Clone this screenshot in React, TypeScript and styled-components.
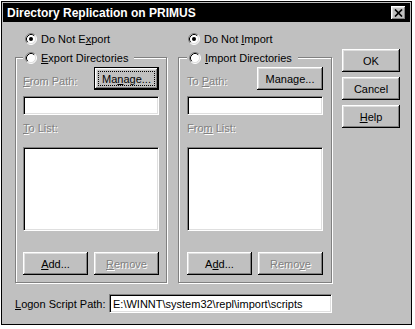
import React from 'react';
import styled, { createGlobalStyle } from 'styled-components';

const GlobalStyle = createGlobalStyle`
  html, body { margin: 0; padding: 0; background: #fff; }
  body { font-family: "Liberation Sans", Arial, sans-serif; font-size: 11px; color: #000; }
  * { box-sizing: border-box; }
`;

const Window = styled.div`
  width: 411px;
  height: 324px;
  margin: 1px 0 0 1px;
  border: 1px solid #000;
  padding: 1px;
  background: #c0c0c0;
  display: flex;
  flex-direction: column;
`;

const TitleBar = styled.div`
  height: 19px;
  flex: none;
  background: #000;
  color: #fff;
  display: flex;
  align-items: center;
  justify-content: space-between;
  padding: 0 4px;
  font-weight: bold;
  font-size: 12px;
  white-space: nowrap;
`;

const CloseButton = styled.div`
  width: 15px;
  height: 14px;
  background: #c0c0c0;
  box-shadow: inset -1px -1px #000, inset 1px 1px #fff, inset -2px -2px #808080, inset 2px 2px #dfdfdf;
  display: flex;
  align-items: center;
  justify-content: center;
`;

const Client = styled.div`
  flex: 1;
  display: flex;
  flex-direction: column;
  padding: 9px 0 0 12px;
`;

const Main = styled.div`
  display: flex;
  align-items: flex-start;
`;

const Column = styled.div<{ $ml?: number }>`
  display: flex;
  flex-direction: column;
  margin-left: ${p => p.$ml ?? 0}px;
`;

const RadioOption = styled.label<{ $ml?: number }>`
  display: inline-flex;
  align-items: center;
  gap: 4px;
  height: 15px;
  white-space: nowrap;
  margin-left: ${p => p.$ml ?? 0}px;
  align-self: flex-start;
`;

const Group = styled.div<{ $w: number; $pl: number; $pr: number }>`
  width: ${p => p.$w}px;
  height: 226px;
  margin-top: 11px;
  border: 1px solid #808080;
  box-shadow: inset 1px 1px 0 #fff, 1px 1px 0 #fff;
  padding: 0 ${p => p.$pr}px 0 ${p => p.$pl}px;
  display: flex;
  flex-direction: column;
`;

const Legend = styled.div`
  margin-top: -8px;
  align-self: flex-start;
  background: #c0c0c0;
  padding: 0 6px 0 2px;
  display: flex;
`;

const PathRow = styled.div`
  margin-top: 2px;
  display: flex;
  justify-content: space-between;
  align-items: flex-start;
`;

const DisabledLabel = styled.div<{ $mt?: number }>`
  color: #808080;
  text-shadow: 1px 1px 0 #fff;
  line-height: 13px;
  height: 13px;
  margin-top: ${p => p.$mt ?? 0}px;
  white-space: nowrap;
`;

const Field = styled.div<{ $w?: number; $mt?: number }>`
  width: ${p => (p.$w ? `${p.$w}px` : '100%')};
  height: 19px;
  margin-top: ${p => p.$mt ?? 0}px;
  background: #fff;
  border: 1px solid;
  border-color: #808080 #fff #fff #808080;
  box-shadow: inset 1px 1px #000, inset -1px -1px #dfdfdf;
  padding: 0 3px;
  display: flex;
  align-items: center;
  white-space: nowrap;
  overflow: hidden;
`;

const ListBox = styled.div`
  width: 100%;
  height: 84px;
  margin-top: 12px;
  background: #fff;
  border: 1px solid;
  border-color: #808080 #fff #fff #808080;
  box-shadow: inset 1px 1px #000, inset -1px -1px #dfdfdf;
`;

const ButtonRow = styled.div`
  margin-top: 21px;
  display: flex;
  gap: 6px;
`;

const Button = styled.div<{ $w: number; $default?: boolean; $off?: boolean }>`
  width: ${p => p.$w}px;
  height: 23px;
  flex: none;
  background: #c0c0c0;
  border: ${p => (p.$default ? '1px solid #000' : 'none')};
  box-shadow: inset -1px -1px #000, inset 1px 1px #fff, inset -2px -2px #808080, inset 2px 2px #dfdfdf;
  color: ${p => (p.$off ? '#808080' : '#000')};
  text-shadow: ${p => (p.$off ? '1px 1px 0 #fff' : 'none')};
  display: flex;
  align-items: center;
  justify-content: center;
  white-space: nowrap;
`;

const FocusRing = styled.span`
  flex: 1;
  align-self: stretch;
  margin: 3px;
  border: 1px dotted #000;
  display: flex;
  align-items: center;
  justify-content: center;
`;

const SideButtons = styled.div`
  margin: 18px 0 0 10px;
  display: flex;
  flex-direction: column;
  gap: 5px;
`;

const LogonRow = styled.div`
  margin-top: 11px;
  display: flex;
  align-items: center;
`;

const LogonLabel = styled.div`
  width: 94px;
  white-space: nowrap;
`;

const RadioIcon: React.FC<{ checked?: boolean }> = ({ checked }) => (
  <svg width="12" height="12" viewBox="0 0 12 12" style={{ flex: 'none' }}>
    <circle cx="6" cy="6" r="5" fill="#fff" />
    <path d="M9.89 2.11 A5.5 5.5 0 0 0 2.11 9.89" fill="none" stroke="#808080" strokeWidth="1" />
    <path d="M2.11 9.89 A5.5 5.5 0 0 0 9.89 2.11" fill="none" stroke="#fff" strokeWidth="1" />
    <path d="M9.18 2.82 A4.5 4.5 0 0 0 2.82 9.18" fill="none" stroke="#000" strokeWidth="1" />
    <path d="M2.82 9.18 A4.5 4.5 0 0 0 9.18 2.82" fill="none" stroke="#dfdfdf" strokeWidth="1" />
    {checked && <circle cx="6" cy="6" r="2" fill="#000" />}
  </svg>
);

const Radio: React.FC<{ checked?: boolean; ml?: number; children: React.ReactNode }> = ({ checked, ml, children }) => (
  <RadioOption $ml={ml}>
    <RadioIcon checked={checked} />
    <span>{children}</span>
  </RadioOption>
);

export default function App() {
  return (
    <>
      <GlobalStyle />
      <Window>
        <TitleBar>
          <span>Directory Replication on PRIMUS</span>
          <CloseButton>
            <svg width="9" height="8" viewBox="0 0 9 8">
              <path d="M1 0.5 L8 7.5 M8 0.5 L1 7.5" stroke="#000" strokeWidth="1.7" />
            </svg>
          </CloseButton>
        </TitleBar>
        <Client>
          <Main>
            <Column>
              <Radio checked ml={10}>
                Do Not E<u>x</u>port
              </Radio>
              <Group $w={152} $pl={7} $pr={7}>
                <Legend>
                  <Radio>
                    <u>E</u>xport Directories
                  </Radio>
                </Legend>
                <PathRow>
                  <DisabledLabel $mt={8}>
                    <u>F</u>rom Path:
                  </DisabledLabel>
                  <Button $w={65} $default>
                    <FocusRing>
                      Ma<u>n</u>age...
                    </FocusRing>
                  </Button>
                </PathRow>
                <Field $mt={6} />
                <DisabledLabel $mt={7}>
                  <u>T</u>o List:
                </DisabledLabel>
                <ListBox />
                <ButtonRow>
                  <Button $w={65}>
                    <span>
                      <u>A</u>dd...
                    </span>
                  </Button>
                  <Button $w={65} $off>
                    <span>
                      <u>R</u>emove
                    </span>
                  </Button>
                </ButtonRow>
              </Group>
            </Column>
            <Column $ml={11}>
              <Radio checked ml={10}>
                Do Not <u>I</u>mport
              </Radio>
              <Group $w={154} $pl={8} $pr={8}>
                <Legend>
                  <Radio>
                    <u>I</u>mport Directories
                  </Radio>
                </Legend>
                <PathRow>
                  <DisabledLabel $mt={8}>
                    To <u>P</u>ath:
                  </DisabledLabel>
                  <Button $w={66}>
                    <span>Manage...</span>
                  </Button>
                </PathRow>
                <Field $mt={6} />
                <DisabledLabel $mt={7}>
                  Fro<u>m</u> List:
                </DisabledLabel>
                <ListBox />
                <ButtonRow>
                  <Button $w={65}>
                    <span>
                      A<u>d</u>d...
                    </span>
                  </Button>
                  <Button $w={65} $off>
                    <span>
                      Remo<u>v</u>e
                    </span>
                  </Button>
                </ButtonRow>
              </Group>
            </Column>
            <SideButtons>
              <Button $w={58}>
                <span>OK</span>
              </Button>
              <Button $w={58}>
                <span>Cancel</span>
              </Button>
              <Button $w={58}>
                <span>
                  <u>H</u>elp
                </span>
              </Button>
            </SideButtons>
          </Main>
          <LogonRow>
            <LogonLabel>
              <u>L</u>ogon Script Path:
            </LogonLabel>
            <Field $w={223}>E:\WINNT\system32\repl\import\scripts</Field>
          </LogonRow>
        </Client>
      </Window>
    </>
  );
}
